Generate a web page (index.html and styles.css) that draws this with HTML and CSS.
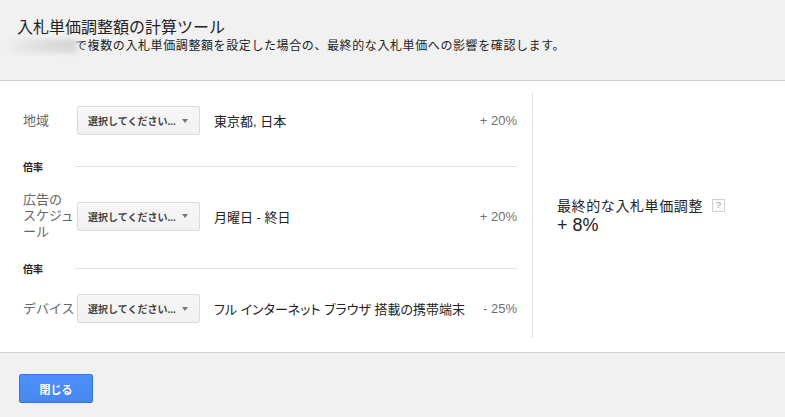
FILE: index.html
```html
<!DOCTYPE html>
<html lang="ja">
<head>
<meta charset="utf-8">
<title>入札単価調整額の計算ツール</title>
<link rel="stylesheet" href="styles.css">
</head>
<body>
<div class="page">
  <header class="header">
    <h1 class="title">入札単価調整額の計算ツール</h1>
    <p class="subtitle"><span class="redacted"></span>で複数の入札単価調整額を設定した場合の、最終的な入札単価への影響を確認します。</p>
  </header>

  <main class="content">
    <div class="calc">
      <div class="factors">
        <div class="row">
          <div class="row-label">地域</div>
          <div class="select"><span class="select-text">選択してください...</span><span class="caret"></span></div>
          <div class="row-value">東京都, 日本</div>
          <div class="row-pct">+ 20%</div>
        </div>

        <div class="sep">
          <div class="sep-label">倍率</div>
          <div class="sep-line"></div>
        </div>

        <div class="row">
          <div class="row-label row-label-multi">広告の<br>スケジュール</div>
          <div class="select"><span class="select-text">選択してください...</span><span class="caret"></span></div>
          <div class="row-value">月曜日 - 終日</div>
          <div class="row-pct">+ 20%</div>
        </div>

        <div class="sep">
          <div class="sep-label">倍率</div>
          <div class="sep-line"></div>
        </div>

        <div class="row">
          <div class="row-label">デバイス</div>
          <div class="select"><span class="select-text">選択してください...</span><span class="caret"></span></div>
          <div class="row-value">フル インターネット ブラウザ 搭載の携帯端末</div>
          <div class="row-pct">- 25%</div>
        </div>
      </div>

      <div class="result">
        <div class="result-label">最終的な入札単価調整<span class="help">?</span></div>
        <div class="result-value">+ 8%</div>
      </div>
    </div>
  </main>

  <footer class="footer">
    <button class="btn-primary" type="button">閉じる</button>
  </footer>
</div>
</body>
</html>
```

FILE: styles.css
```css
html, body {
  margin: 0;
  padding: 0;
}

body {
  font-family: "Liberation Sans", "Noto Sans CJK JP", sans-serif;
  color: #222;
  background: #fff;
}

.page {
  width: 785px;
  height: 417px;
  display: flex;
  flex-direction: column;
  overflow: hidden;
}

/* Header */
.header {
  flex: none;
  height: 81px;
  box-sizing: border-box;
  background: #f1f1f1;
  border-bottom: 1px solid #d2d2d2;
  padding: 18px 0 0 17px;
}

.title {
  margin: 0;
  font-size: 16px;
  line-height: 20px;
  font-weight: normal;
  color: #222;
}

.subtitle {
  margin: 1px 0 0;
  font-size: 12px;
  line-height: 15px;
  letter-spacing: 0.6px;
  color: #222;
  white-space: nowrap;
}

.redacted {
  display: inline-block;
  width: 68px;
  height: 14px;
  margin-left: -8px;
  margin-right: -2px;
  vertical-align: -3px;
  background: linear-gradient(to right, #ececec, #dcdcdc 60%, #d6d6d6);
  filter: blur(2.5px);
}

/* Main */
.content {
  flex: 1;
  background: #fff;
}

.calc {
  display: flex;
  margin-top: 12px;
}

.factors {
  width: 533px;
  box-sizing: border-box;
  padding: 13px 15px 15px 23px;
  border-right: 1px solid #e2e2e2;
}

.row {
  display: flex;
  align-items: center;
}

.row-label {
  width: 54px;
  flex: none;
  font-size: 13px;
  line-height: 16px;
  color: #666;
}

.select {
  width: 123px;
  height: 29px;
  box-sizing: border-box;
  flex: none;
  display: flex;
  align-items: center;
  padding-left: 10px;
  border: 1px solid #dcdcdc;
  border-radius: 2px;
  background: linear-gradient(#f6f6f6, #f1f1f1);
  color: #444;
}

.select-text {
  font-size: 10px;
  font-weight: bold;
  white-space: nowrap;
}

.caret {
  margin-left: 6px;
  width: 0;
  height: 0;
  border-left: 3.5px solid transparent;
  border-right: 3.5px solid transparent;
  border-top: 4px solid #777;
}

.row-value {
  flex: 1;
  min-width: 0;
  margin-left: 14px;
  font-size: 13px;
  font-feature-settings: "palt";
  color: #222;
  white-space: nowrap;
}

.row-pct {
  flex: none;
  margin-left: 8px;
  font-size: 13px;
  color: #707070;
  white-space: nowrap;
}

.sep {
  display: flex;
  align-items: center;
  height: 14px;
  margin: 24px 0 19px;
}

.sep + .row + .sep {
  margin-top: 21px;
  margin-bottom: 19px;
}

.sep-label {
  width: 52px;
  flex: none;
  font-size: 10px;
  font-weight: bold;
  color: #222;
}

.sep-line {
  flex: 1;
  border-top: 1px solid #e3e3e3;
}

.result {
  flex: 1;
  display: flex;
  flex-direction: column;
  justify-content: center;
  padding-left: 24px;
}

.result-label {
  display: flex;
  align-items: center;
  font-size: 14px;
  line-height: 18px;
  letter-spacing: 0.6px;
  color: #222;
}

.help {
  margin-left: 9px;
  width: 13px;
  height: 13px;
  box-sizing: border-box;
  border: 1px solid #d0d0d0;
  background: #fafafa;
  color: #999;
  font-size: 9px;
  line-height: 11px;
  text-align: center;
  letter-spacing: 0;
}

.result-value {
  font-size: 18px;
  line-height: 20px;
  color: #222;
}

/* Footer */
.footer {
  flex: none;
  height: 65px;
  box-sizing: border-box;
  background: #f1f1f1;
  border-top: 1px solid #d2d2d2;
  padding: 21px 0 0 19px;
}

.btn-primary {
  width: 74px;
  height: 29px;
  border: 1px solid #3079ed;
  border-radius: 2px;
  background: linear-gradient(#4d90fe, #4787ed);
  color: #fff;
  font-family: "Liberation Sans", "Noto Sans CJK JP", sans-serif;
  font-size: 11px;
  font-weight: bold;
  padding: 0;
  cursor: pointer;
}
```
